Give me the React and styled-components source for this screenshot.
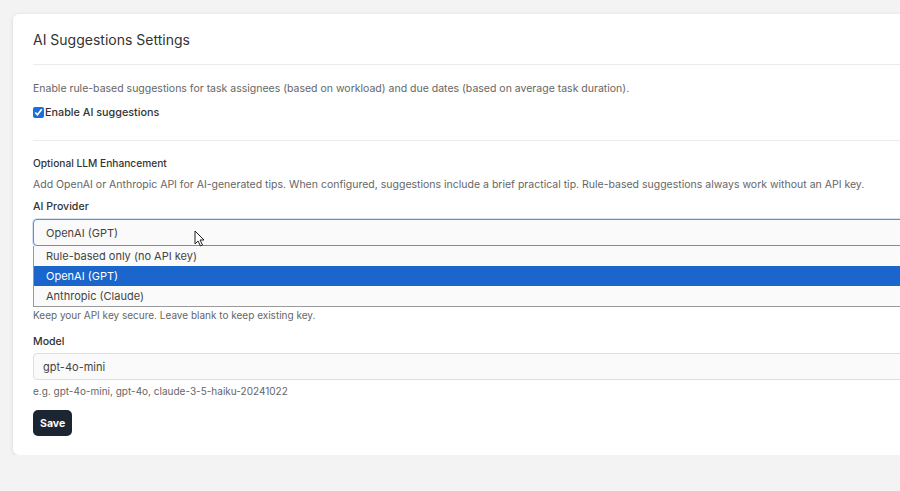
import React from "react";
import styled, { createGlobalStyle } from "styled-components";

const Global = createGlobalStyle`
  html, body { margin: 0; padding: 0; background: #f3f3f3; overflow: hidden; }
  body { font-family: Inter, "Noto Sans", sans-serif; color: #333; }
  * { box-sizing: border-box; }
`;

const Page = styled.div`
  padding: 14px 0 0 13px;
  width: 1100px;
`;

const Card = styled.section`
  background: #fff;
  border-radius: 6px;
  box-shadow: 0 1px 4px rgba(0, 0, 0, 0.12);
  width: 1000px;
  padding: 0 20px 19px 20px;
`;

const Header = styled.div`
  height: 51px;
  display: flex;
  align-items: flex-end;
  border-bottom: 1px solid #ebebeb;
`;

const Title = styled.h2`
  margin: 0 0 14px 0;
  font-size: 14px;
  font-weight: 400;
  color: #333;
  line-height: 20px;
`;

const Section = styled.div`
  padding: ${(p) => p.$pad || "0"};
  border-bottom: ${(p) => (p.$divider ? "1px solid #ebebeb" : "none")};
`;

const Text = styled.p`
  margin: ${(p) => p.$m || "0"};
  font-size: ${(p) => (p.$small ? "10px" : "10.5px")};
  line-height: 16px;
  color: #666;
  white-space: nowrap;
`;

const CheckRow = styled.label`
  display: flex;
  align-items: center;
  font-size: 10.8px;
  font-weight: 500;
  color: #333;
  margin-top: 7px;
  height: 16px;
`;

const Check = styled.input`
  width: 11px;
  height: 11px;
  margin: 0 1px 0 0;
  accent-color: #1a6fd8;
`;

const SubTitle = styled.h3`
  margin: 0;
  font-size: 10.2px;
  font-weight: 500;
  color: #333;
  line-height: 16px;
`;

const Label = styled.div`
  font-size: 10.6px;
  font-weight: 500;
  color: #333;
  line-height: 16px;
  margin: ${(p) => p.$m || "0"};
`;

const Field = styled.div`
  position: relative;
`;

const SelectBox = styled.div`
  height: 27px;
  border: 1px solid #5b8fd9;
  border-radius: 4px;
  background: #fafafa;
  display: flex;
  align-items: center;
  padding-left: 12px;
  font-size: 11px;
  color: #444;
  box-shadow: 0 0 0 1px rgba(91, 143, 217, 0.25);
`;

const Menu = styled.ul`
  position: absolute;
  left: 0;
  right: 0;
  top: 27px;
  margin: 0;
  padding: 0;
  list-style: none;
  background: #fafafa;
  border: 1px solid #9a9a9a;
  border-top: none;
  z-index: 2;
`;

const Option = styled.li`
  height: 20px;
  display: flex;
  align-items: center;
  padding-left: 12px;
  font-size: 11px;
  color: ${(p) => (p.$sel ? "#fff" : "#444")};
  background: ${(p) => (p.$sel ? "#1a66cc" : "transparent")};
`;

const Hidden = styled.div`
  height: 77px;
  display: flex;
  align-items: flex-end;
`;

const Input = styled.div`
  height: 27px;
  border: 1px solid #dedede;
  border-radius: 4px;
  background: #fafafa;
  display: flex;
  align-items: center;
  padding-left: 9px;
  font-size: 11px;
  color: #444;
`;

const Button = styled.button`
  display: block;
  margin-top: 11px;
  height: 26px;
  padding: 0 7px;
  border: none;
  border-radius: 5px;
  background: #1c2532;
  color: #fff;
  font-family: inherit;
  font-size: 10.5px;
  font-weight: 700;
`;

const Cursor = styled.svg`
  position: absolute;
  left: 161px;
  top: 11px;
  width: 11px;
  height: 17px;
  z-index: 3;
`;

export default function App() {
  return (
    <>
      <Global />
      <Page>
        <Card>
          <Header>
            <Title>AI Suggestions Settings</Title>
          </Header>
          <Section $divider $pad="16px 0 20px 0">
            <Text>
              Enable rule-based suggestions for task assignees (based on workload) and due dates (based on average task duration).
            </Text>
            <CheckRow>
              <Check type="checkbox" defaultChecked readOnly />
              Enable AI suggestions
            </CheckRow>
          </Section>
          <Section $pad="14px 0 0 0">
            <SubTitle>Optional LLM Enhancement</SubTitle>
            <Text $m="6px 0 0 0">
              Add OpenAI or Anthropic API for AI-generated tips. When configured, suggestions include a brief practical tip. Rule-based suggestions always work without an API key.
            </Text>
            <Label $m="6px 0 4px 0">AI Provider</Label>
            <Field>
              <SelectBox>OpenAI (GPT)</SelectBox>
              <Cursor viewBox="0 0 11 17">
                <path d="M1 1 L1 14 L4 11 L6.5 16 L8.5 15 L6 10 L10 10 Z" fill="#fff" stroke="#222" strokeWidth="1" strokeLinejoin="round" />
              </Cursor>
              <Menu>
                <Option>Rule-based only (no API key)</Option>
                <Option $sel>OpenAI (GPT)</Option>
                <Option>Anthropic (Claude)</Option>
              </Menu>
              <Hidden>
                <Text $small>Keep your API key secure. Leave blank to keep existing key.</Text>
              </Hidden>
            </Field>
            <Label $m="11px 0 3px 0">Model</Label>
            <Input>gpt-4o-mini</Input>
            <Text $small $m="3px 0 0 0">e.g. gpt-4o-mini, gpt-4o, claude-3-5-haiku-20241022</Text>
            <Button>Save</Button>
          </Section>
        </Card>
      </Page>
    </>
  );
}
